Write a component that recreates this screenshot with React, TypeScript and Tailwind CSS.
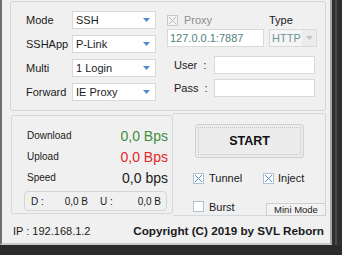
import React from "react";

const F = { fontFamily: '"Liberation Sans", Arial, sans-serif' };

function Arrow({ color = "#4f8ec9" }: { color?: string }) {
  return (
    <svg width="7" height="4" viewBox="0 0 7 4">
      <path d="M0 0 H7 L3.5 4 Z" fill={color} />
    </svg>
  );
}

function Select({ text, w }: { text: string; w: string }) {
  return (
    <div className={`${w} h-[18px] border border-[#d9d9d9] bg-white flex items-center justify-between`}>
      <span className="pl-[3px] text-[11px] text-[#1a1a1a] leading-none">{text}</span>
      <span className="w-[18px] flex items-center justify-center">
        <Arrow />
      </span>
    </div>
  );
}

function Check({ checked }: { checked: boolean }) {
  return (
    <div className="w-[11px] h-[11px] border border-[#b3c0cc] bg-white flex items-center justify-center">
      {checked && (
        <svg width="9" height="9" viewBox="0 0 9 9">
          <path d="M1 1 L8 8 M8 1 L1 8" stroke="#4a90cc" strokeWidth="1" />
        </svg>
      )}
    </div>
  );
}

export default function App() {
  return (
    <div className="w-[342px] h-[255px] bg-[#2b2b2b] flex flex-col overflow-hidden" style={F}>
      <div className="flex">
        <div className="w-[332px] h-[245px] bg-[#f0f0f0] border-l-2 border-l-[#6e6e6e] border-r-2 border-r-[#a8a8a8] border-b-2 border-b-[#c9c9c9] flex flex-col">
          {/* Box 1 */}
          <div className="mt-[1px] ml-[8px] w-[316px] h-[110px] border border-[#d5d9dc] rounded-[2px] flex pl-[15px] pt-[9px]">
            <div className="flex flex-col gap-[6px]">
              {[
                ["Mode", "SSH"],
                ["SSHApp", "P-Link"],
                ["Multi", "1 Login"],
                ["Forward", "IE Proxy"],
              ].map(([l, v]) => (
                <div key={l} className="flex items-center h-[18px]">
                  <span className="w-[46px] text-[11px] text-[#1a1a1a]">{l}</span>
                  <Select text={v} w="w-[84px]" />
                </div>
              ))}
            </div>
            <div className="ml-[11px] flex flex-col">
              <div className="flex">
                <div className="w-[97px] flex flex-col">
                  <div className="h-[18px] flex items-center gap-[6px]">
                    <div className="w-[11px] h-[11px] border border-[#c8c8c8] bg-[#f4f4f4] flex items-center justify-center">
                      <svg width="9" height="9" viewBox="0 0 9 9">
                        <path d="M1 1 L8 8 M8 1 L1 8" stroke="#b8b8b8" strokeWidth="1" />
                      </svg>
                    </div>
                    <span className="text-[11px] text-[#8d8d8d]">Proxy</span>
                  </div>
                  <div className="h-[18px] border border-[#d9d9d9] bg-white flex items-center pl-[2px] text-[11px] text-[#4f7f7f]">
                    127.0.0.1:7887
                  </div>
                </div>
                <div className="ml-[5px] w-[48px] flex flex-col">
                  <div className="h-[18px] flex items-center text-[11px] text-[#1a1a1a]">Type</div>
                  <div className="h-[18px] border border-[#d9d9d9] bg-[#f5f5f5] flex items-center justify-between">
                    <span className="pl-[2px] text-[11px] text-[#6c9494]">HTTP</span>
                    <span className="w-[14px] h-[16px] bg-[#ececec] flex items-center justify-center">
                      <Arrow color="#c4c4c4" />
                    </span>
                  </div>
                </div>
              </div>
              <div className="mt-[9px] flex flex-col gap-[5px]">
                {["User", "Pass"].map((l) => (
                  <div key={l} className="flex items-center h-[18px]">
                    <span className="w-[47px] pl-[7px] text-[11px] text-[#1a1a1a] whitespace-pre">{l}  :</span>
                    <div className="w-[101px] h-[18px] border border-[#d9d9d9] bg-white" />
                  </div>
                ))}
              </div>
            </div>
          </div>
          {/* Lower */}
          <div className="flex items-start mt-[2px]">
            <div className="mt-[2px] ml-[9px] w-[162px] h-[99px] border border-[#d5d9dc] rounded-[2px] flex flex-col pl-[15px] pr-[4px] pt-[9px]">
              {[
                ["Download", "0,0 Bps", "text-[#3e8e3e]"],
                ["Upload", "0,0 Bps", "text-[#e5262b]"],
                ["Speed", "0,0 bps", "text-[#1a1a1a]"],
              ].map(([l, v, c]) => (
                <div key={l} className="h-[21px] flex items-center justify-between">
                  <span className="text-[10px] text-[#1a1a1a]">{l}</span>
                  <span className={`text-[14px] leading-none ${c}`}>{v}</span>
                </div>
              ))}
              <div className="mt-[3px] -ml-[3px] w-[143px] h-[20px] border border-[#d5d5d5] rounded-[4px] flex items-center text-[10px] text-[#1a1a1a] pl-[6px] pr-[5px]">
                <span className="w-[20px]">D :</span>
                <span className="w-[37px] text-right">0,0 B</span>
                <span className="ml-[12px] w-[20px]">U :</span>
                <span className="flex-1 text-right">0,0 B</span>
              </div>
            </div>
            <div className="w-[153px] h-[103px] border border-l-0 border-[#d5d9dc] rounded-r-[2px] flex flex-col relative">
              <div className="mt-[10px] ml-[22px] w-[109px] h-[36px] rounded-[3px] border border-[#cfcfcf] bg-[#ececec] p-[2px]">
                <div className="w-full h-full border border-dotted border-[#c4c4c4] flex items-center justify-center text-[12.5px] font-bold text-[#111]">
                  START
                </div>
              </div>
              <div className="mt-[12px] ml-[20px] flex items-center">
                <Check checked />
                <span className="ml-[5px] text-[11px] text-[#1a1a1a] w-[54px]">Tunnel</span>
                <Check checked />
                <span className="ml-[4px] text-[11px] text-[#1a1a1a]">Inject</span>
              </div>
              <div className="mt-[12px] ml-[20px] flex items-center">
                <Check checked={false} />
                <span className="ml-[5px] text-[11px] text-[#1a1a1a]">Burst</span>
              </div>
              <div className="absolute right-[-1px] bottom-[-1px] w-[60px] h-[13px] border border-[#cfcfcf] bg-[#f2f2f2] flex items-center justify-center text-[9.5px] text-[#1a1a1a] leading-none">
                Mini Mode
              </div>
            </div>
          </div>
          {/* Status */}
          <div className="mt-[7px] ml-[11px] mr-[6px] flex items-center justify-between h-[16px]">
            <span className="text-[11px] text-[#1a1a1a]">IP : 192.168.1.2</span>
            <span className="text-[11.7px] font-bold text-[#1a1a1a]">Copyright (C) 2019 by SVL Reborn</span>
          </div>
        </div>
        <div className="flex-1 h-[245px] bg-[#2e2e2e] flex">
          <div className="ml-[3px] w-[2px] h-full bg-[#4a4a4a]" />
        </div>
      </div>
    </div>
  );
}
